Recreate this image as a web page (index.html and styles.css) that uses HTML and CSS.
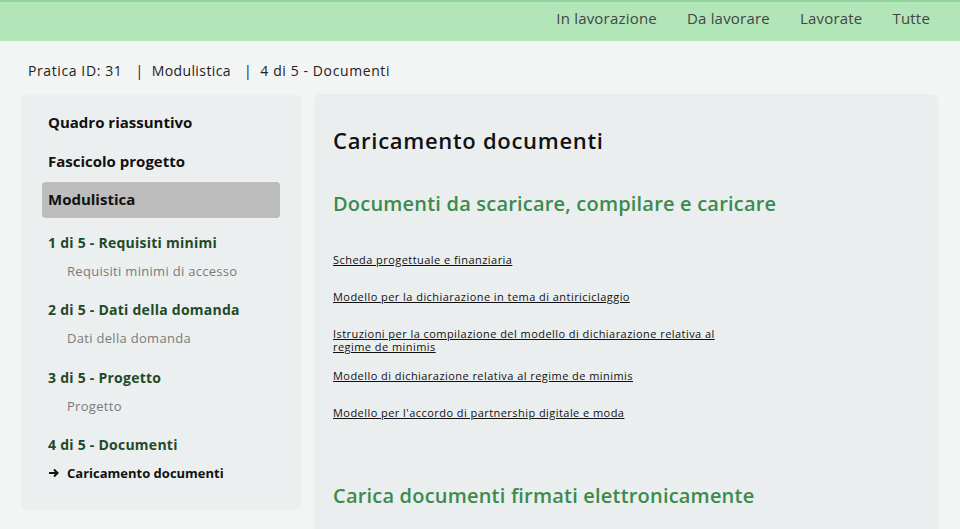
FILE: index.html
```html
<!DOCTYPE html>
<html lang="it">
<head>
<meta charset="utf-8">
<title>Caricamento documenti</title>
<link rel="stylesheet" href="styles.css">
</head>
<body>
<header class="topbar">
  <nav class="tabs">
    <a class="tab">In lavorazione</a>
    <a class="tab">Da lavorare</a>
    <a class="tab">Lavorate</a>
    <a class="tab last">Tutte</a>
  </nav>
</header>
<div class="breadcrumb">
  <span>Pratica ID: 31</span><span class="sep">|</span><span>Modulistica</span><span class="sep">|</span><span>4 di 5 - Documenti</span>
</div>
<div class="layout">
  <aside class="sidebar">
    <a class="side-item">Quadro riassuntivo</a>
    <a class="side-item">Fascicolo progetto</a>
    <a class="side-item active">Modulistica</a>
    <div class="steps">
      <div class="step">
        <div class="step-title">1 di 5 - Requisiti minimi</div>
        <div class="step-sub">Requisiti minimi di accesso</div>
      </div>
      <div class="step">
        <div class="step-title">2 di 5 - Dati della domanda</div>
        <div class="step-sub">Dati della domanda</div>
      </div>
      <div class="step">
        <div class="step-title">3 di 5 - Progetto</div>
        <div class="step-sub">Progetto</div>
      </div>
      <div class="step">
        <div class="step-title">4 di 5 - Documenti</div>
        <div class="step-current"><svg class="arrow" width="11" height="10" viewBox="0 0 11 10"><path d="M1 5H9.5M6 1.5L9.5 5L6 8.5" fill="none" stroke="#111" stroke-width="2"/></svg>Caricamento documenti</div>
      </div>
    </div>
  </aside>
  <main class="content">
    <h1 class="title">Caricamento documenti</h1>
    <h2 class="section">Documenti da scaricare, compilare e caricare</h2>
    <ul class="docs">
      <li><a>Scheda progettuale e finanziaria</a></li>
      <li><a>Modello per la dichiarazione in tema di antiriciclaggio</a></li>
      <li class="wrap"><a>Istruzioni per la compilazione del modello di dichiarazione relativa al regime de minimis</a></li>
      <li><a>Modello di dichiarazione relativa al regime de minimis</a></li>
      <li><a>Modello per l'accordo di partnership digitale e moda</a></li>
    </ul>
    <h2 class="section second">Carica documenti firmati elettronicamente</h2>
  </main>
</div>
</body>
</html>
```

FILE: styles.css
```css
* { box-sizing: border-box; }
html, body { margin: 0; padding: 0; }
body {
  background: #f3f4f4;
  font-family: "Open Sans", "DejaVu Sans", sans-serif;
  color: #222;
  height: 529px;
  overflow: hidden;
}
a { color: inherit; text-decoration: none; }

.topbar {
  height: 41px;
  background: #b2e6b9;
  border-top: 2px solid #92d49d;
  display: flex;
  justify-content: flex-end;
  align-items: center;
  padding-right: 30px;
}
.tabs { display: flex; gap: 30px; }
.tab {
  font-size: 15px;
  color: #444;
  letter-spacing: 0.2px;
  margin-top: -8px;
}

.breadcrumb {
  padding: 20px 0 0 28px;
  height: 53px;
  font-size: 14px;
  letter-spacing: 0.6px;
  color: #222;
}
.breadcrumb span:nth-child(3) { letter-spacing: 0.4px; }
.breadcrumb .sep { margin: 0 8px 0 13px; }

.layout {
  display: flex;
  gap: 13px;
  padding: 0 22px 0 21px;
  align-items: flex-start;
}

.sidebar {
  width: 280px;
  flex: none;
  height: 416px;
  background: #eceff0;
  border-radius: 6px;
  padding: 14px 21px 0 21px;
  display: flex;
  flex-direction: column;
}
.side-item {
  display: block;
  font-size: 15px;
  font-weight: 700;
  color: #111;
  height: 39px;
  line-height: 28px;
  padding-left: 6px;
}
.side-item.active {
  height: 36px;
  line-height: 35px;
  background: #bdbdbd;
  border-radius: 4px;
  margin-top: -4px;
}
.steps { padding-left: 6px; padding-top: 15px; }
.step { margin-bottom: 19.3px; }
.step-title {
  font-size: 14px;
  font-weight: 700;
  color: #1f4a2a;
  line-height: 20px;
  letter-spacing: 0.25px;
}
.step-sub {
  font-size: 13px;
  color: #7a7a7a;
  padding-left: 19px;
  line-height: 20px;
  margin-top: 8px;
  letter-spacing: 0.3px;
}
.step-current {
  font-size: 13px;
  font-weight: 700;
  color: #111;
  line-height: 20px;
  margin-top: 8px;
  display: flex;
  align-items: center;
}
.arrow { width: 11px; height: 10px; margin-right: 8px; flex: none; }

.content {
  flex: 1;
  height: 460px;
  background: #ebeeef;
  border-radius: 6px;
  padding: 30px 19px 0 19px;
}
.title {
  margin: 0;
  font-size: 22px;
  font-weight: 600;
  color: #111;
  line-height: 32px;
  letter-spacing: 0.7px;
}
.section {
  margin: 35px 0 0 0;
  font-size: 20px;
  font-weight: 600;
  color: #3a8b4c;
  line-height: 26px;
  letter-spacing: 0.2px;
}
.section.second { margin-top: 64px; }
.docs {
  list-style: none;
  margin: 0;
  padding: 35.5px 0 0 0;
  width: 385px;
}
.docs li {
  font-size: 11px;
  line-height: 13px;
  margin-bottom: 24px;
  letter-spacing: 0.45px;
}
.docs li.wrap { margin-bottom: 16px; }
.docs li a { text-decoration: underline; color: #111; }
```
